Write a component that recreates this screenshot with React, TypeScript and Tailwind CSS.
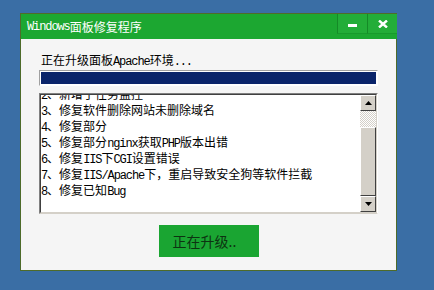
import React from "react";

const lines = [
  "2、新增了任务监控",
  "3、修复软件删除网站未删除域名",
  "4、修复部分",
  "5、修复部分nginx获取PHP版本出错",
  "6、修复IIS下CGI设置错误",
  "7、修复IIS/Apache下，重启导致安全狗等软件拦截",
  "8、修复已知Bug",
];

// ascii runs get the narrow mono face, like the half-width glyphs of SimSun
function Mixed({ text }: { text: string }) {
  const parts = text.split(/([\x20-\x7e]+)/);
  return (
    <>
      {parts.map((p, i) =>
        /[\x20-\x7e]/.test(p) ? (
          <span key={i} className="font-['Liberation_Mono'] text-[12px] tracking-[-1.1px]">
            {p}
          </span>
        ) : (
          <span key={i}>{p}</span>
        )
      )}
    </>
  );
}

function Arrow({ up }: { up?: boolean }) {
  return (
    <div className="w-[16px] h-[16px] bg-[#d4d0c8] border border-t-white border-l-white border-r-[#404040] border-b-[#404040] flex items-center justify-center">
      <svg width="7" height="4" viewBox="0 0 7 4">
        {up ? <path d="M3.5 0 L7 4 L0 4 Z" fill="#000" /> : <path d="M0 0 L7 0 L3.5 4 Z" fill="#000" />}
      </svg>
    </div>
  );
}

export default function App() {
  return (
    <div className="w-[434px] h-[290px] bg-[#3a6ea5] pt-[13px] pl-[20px] font-['Noto_Sans_CJK_SC',sans-serif] overflow-hidden">
      <div className="w-[377px] h-[258px] flex flex-col">
        {/* title bar */}
        <div className="h-[26px] bg-[#1ca731] border-l border-t border-[#4e6b2a] flex items-start">
          <div className="flex-1 pl-[6px] h-[26px] flex items-center text-white text-[12px] leading-none">
            <Mixed text="Windows面板修复程序" />
          </div>
          <div className="w-[30px] h-[20px] bg-[#23ad38] border-l border-b border-l-[#158a27] border-b-[#189a2c] flex items-end justify-center pb-[6px]">
            <div className="w-[9px] h-[3px] bg-white" />
          </div>
          <div className="w-[30px] h-[20px] bg-[#23ad38] border-l border-b border-l-[#158a27] border-b-[#189a2c] flex items-center justify-center">
            <svg width="10" height="8" viewBox="0 0 10 8">
              <path d="M1 0.5 L9 7.5 M9 0.5 L1 7.5" stroke="#fff" strokeWidth="2.4" />
            </svg>
          </div>
        </div>

        {/* body */}
        <div className="flex-1 bg-[#f5f5f5] border-x border-b border-[#4e6b2a] px-[18px] pt-[13px] flex flex-col">
          <div className="ml-[2px] h-[16px] text-[12px] leading-[16px] text-black">
            <Mixed text="正在升级面板Apache环境..." />
          </div>

          <div className="mt-[2px] h-[16px] border border-t-[#a0a0a0] border-l-[#a0a0a0] border-r-white border-b-white bg-white p-[1px]">
            <div className="h-full bg-[#0a246a]" />
          </div>

          <div className="mt-[7px] h-[121px] border border-t-[#808080] border-l-[#808080] border-r-white border-b-[#d4d0c8]">
            <div className="h-full border border-t-[#404040] border-l-[#404040] border-r-[#d4d0c8] border-b-[#d4d0c8] bg-white flex">
              <div className="flex-1 overflow-hidden">
                <div className="-mt-[9px]">
                  {lines.map((l) => (
                    <div key={l} className="h-[16px] text-[12px] leading-[16px] text-black whitespace-nowrap">
                      <Mixed text={l} />
                    </div>
                  ))}
                </div>
              </div>
              <div className="w-[16px] flex flex-col">
                <Arrow up />
                <div className="h-[16px] bg-[image:repeating-conic-gradient(#d4d0c8_0%_25%,#ffffff_0%_50%)] bg-[length:2px_2px]" />
                <div className="flex-1 bg-[#d4d0c8] border border-t-white border-l-white border-r-[#404040] border-b-[#404040]" />
                <Arrow />
              </div>
            </div>
          </div>

          <div className="mt-[11px] mx-auto w-[100px] h-[32px] bg-[#1aa532] flex items-center pl-[14px] text-[14px] text-[#0d3311] leading-none">
            正在升级..
          </div>
        </div>
      </div>
    </div>
  );
}
